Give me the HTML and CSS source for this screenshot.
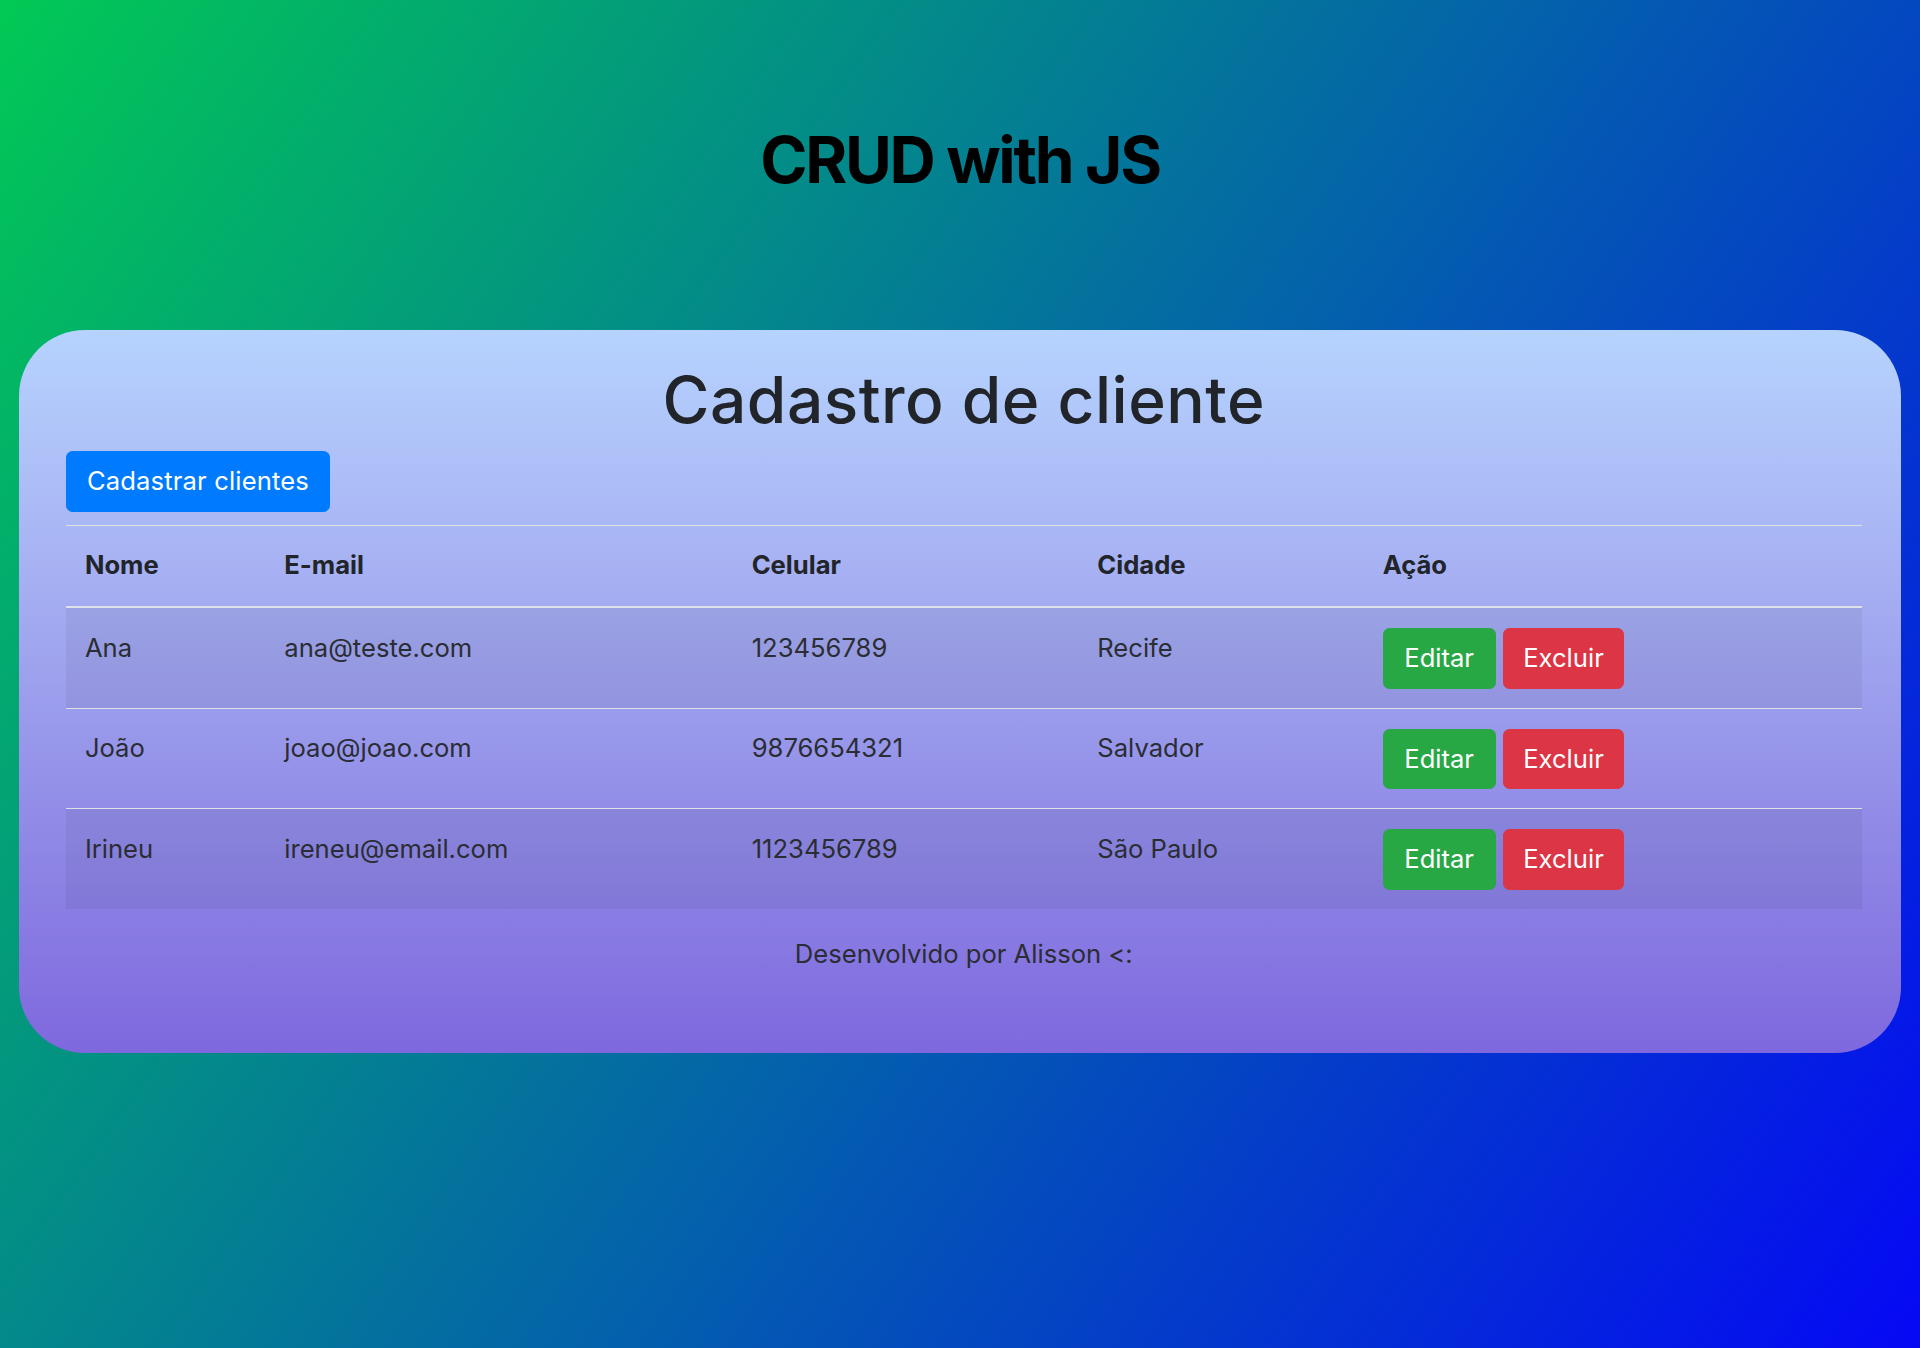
FILE: index.html
```html
<!DOCTYPE html>
<html lang="pt-BR">
<head>
<meta charset="utf-8">
<title>CRUD with JS</title>
<link rel="stylesheet" href="styles.css">
</head>
<body>
  <header class="page-header">
    <h1 class="page-title">CRUD with JS</h1>
  </header>
  <main class="card">
    <h2 class="card-title">Cadastro de cliente</h2>
    <div class="toolbar">
      <button class="btn btn-primary" type="button">Cadastrar clientes</button>
    </div>
    <table class="table">
      <colgroup>
        <col class="col-nome">
        <col class="col-email">
        <col class="col-cel">
        <col class="col-cidade">
        <col class="col-acao">
      </colgroup>
      <thead>
        <tr>
          <th>Nome</th>
          <th>E-mail</th>
          <th>Celular</th>
          <th>Cidade</th>
          <th>Ação</th>
        </tr>
      </thead>
      <tbody>
        <tr>
          <td>Ana</td>
          <td>ana@teste.com</td>
          <td>123456789</td>
          <td>Recife</td>
          <td><div class="actions"><button class="btn btn-success" type="button">Editar</button><button class="btn btn-danger" type="button">Excluir</button></div></td>
        </tr>
        <tr>
          <td>João</td>
          <td>joao@joao.com</td>
          <td>9876654321</td>
          <td>Salvador</td>
          <td><div class="actions"><button class="btn btn-success" type="button">Editar</button><button class="btn btn-danger" type="button">Excluir</button></div></td>
        </tr>
        <tr>
          <td>Irineu</td>
          <td>ireneu@email.com</td>
          <td>1123456789</td>
          <td>São Paulo</td>
          <td><div class="actions"><button class="btn btn-success" type="button">Editar</button><button class="btn btn-danger" type="button">Excluir</button></div></td>
        </tr>
      </tbody>
    </table>
    <footer class="card-footer">Desenvolvido por Alisson &lt;:</footer>
  </main>
</body>
</html>
```

FILE: styles.css
```css
* {
  box-sizing: border-box;
}

html, body {
  margin: 0;
  padding: 0;
}

body {
  min-height: 1348px;
  font-family: "Inter", "Noto Sans", sans-serif;
  font-size: 25.6px;
  line-height: 38.4px;
  color: #212529;
  background: linear-gradient(125deg, #02c955 0%, #0508f5 100%);
  overflow: hidden;
}

.page-header {
  padding-top: 122.3px;
}

.page-title {
  margin: 0;
  text-align: center;
  font-size: 64px;
  line-height: 76.8px;
  font-weight: 700;
  letter-spacing: -2.3px;
  color: #000;
}

.card {
  margin: 131px 19.2px 0;
  padding: 31.6px 39px 54px 46.5px;
  border-radius: 66px;
  background: linear-gradient(180deg, #b6d3fe 0%, #a6aff2 35%, #8f89e6 70%, #7f68de 100%);
}

.card-title {
  margin: 0 0 12.8px;
  text-align: center;
  font-size: 64px;
  line-height: 76.8px;
  font-weight: 500;
  letter-spacing: 0.5px;
  color: #212529;
}

.toolbar {
  display: flex;
  margin-bottom: 13.5px;
}

.btn {
  display: inline-block;
  font-family: inherit;
  font-size: 25.6px;
  line-height: 38.4px;
  font-weight: 400;
  padding: 10.1px 19.6px;
  border: 1px solid transparent;
  border-radius: 6.4px;
  color: #fff;
  cursor: pointer;
}

.btn-primary {
  background: #007bff;
  border-color: #007bff;
  padding-left: 20.2px;
  padding-right: 20.2px;
  letter-spacing: 0.15px;
}

.btn-success {
  background: #28a745;
  border-color: #28a745;
  padding-left: 20.6px;
  padding-right: 20.6px;
}

.btn-danger {
  background: #dc3545;
  border-color: #dc3545;
}

.table {
  width: 100%;
  table-layout: fixed;
  border-collapse: collapse;
  margin-bottom: 25.6px;
  color: #212529;
}

.col-nome { width: 199.4px; }
.col-email { width: 467.4px; }
.col-cel { width: 345.6px; }
.col-cidade { width: 285.4px; }
.col-acao { width: 498.3px; }

.table th,
.table td {
  padding: 19.8px 19.2px 19.2px;
  text-align: left;
  vertical-align: top;
  border-top: 1px solid #dee2e6;
}

.table th {
  font-weight: 700;
  padding-top: 20px;
  padding-bottom: 21.5px;
  border-bottom: 2px solid #dee2e6;
}

.table td {
  color: #2a2d33;
}

.table td:not(:last-child) {
  padding-top: 20.4px;
}

.table tbody tr:nth-child(odd) {
  background: rgba(0, 0, 0, 0.05);
}

.actions {
  display: flex;
  gap: 7px;
}

.card-footer {
  text-align: center;
  margin-bottom: 25.6px;
  color: #2a2d33;
}
```
